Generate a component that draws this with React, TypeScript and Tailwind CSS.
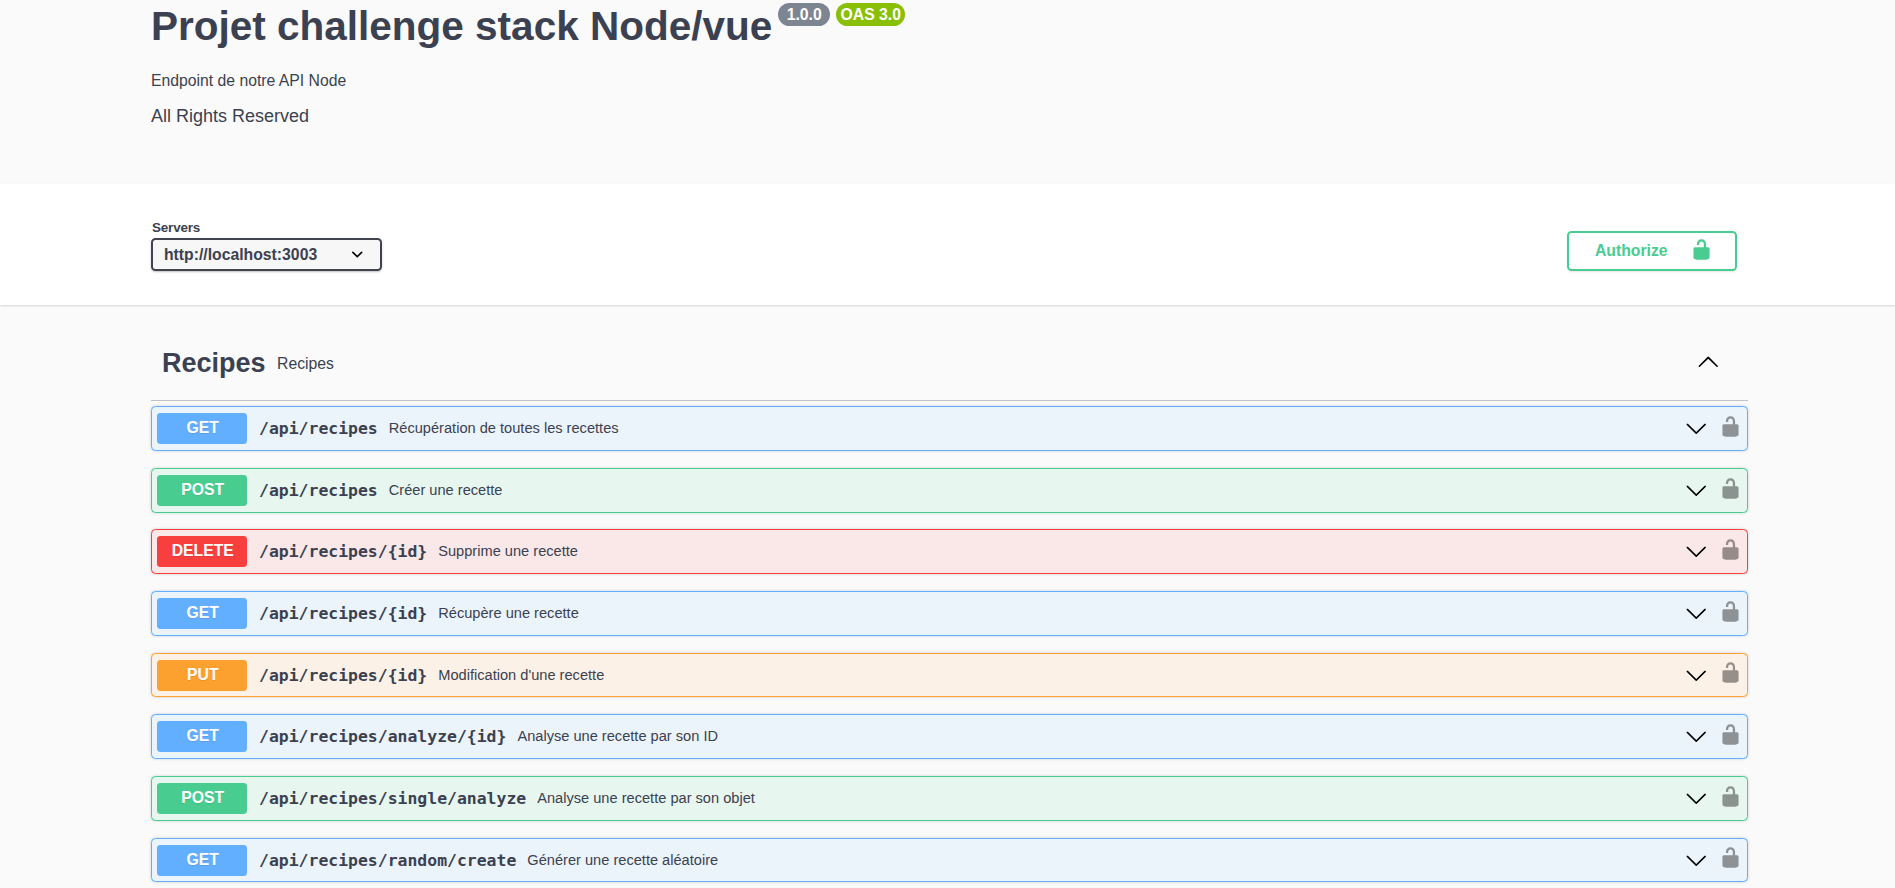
type Method = "GET" | "POST" | "PUT" | "DELETE";

interface Operation {
  method: Method;
  path: string;
  summary: string;
}

const operations: Operation[] = [
  { method: "GET", path: "/api/recipes", summary: "Récupération de toutes les recettes" },
  { method: "POST", path: "/api/recipes", summary: "Créer une recette" },
  { method: "DELETE", path: "/api/recipes/{id}", summary: "Supprime une recette" },
  { method: "GET", path: "/api/recipes/{id}", summary: "Récupère une recette" },
  { method: "PUT", path: "/api/recipes/{id}", summary: "Modification d'une recette" },
  { method: "GET", path: "/api/recipes/analyze/{id}", summary: "Analyse une recette par son ID" },
  { method: "POST", path: "/api/recipes/single/analyze", summary: "Analyse une recette par son objet" },
  { method: "GET", path: "/api/recipes/random/create", summary: "Générer une recette aléatoire" },
];

const rowStyles: Record<Method, string> = {
  GET: "border-[#61affe] bg-[#ebf3fb]",
  POST: "border-[#49cc90] bg-[#e7f6ef]",
  PUT: "border-[#fca130] bg-[#fbf1e6]",
  DELETE: "border-[#f93e3e] bg-[#fae7e7]",
};

const badgeStyles: Record<Method, string> = {
  GET: "bg-[#61affe]",
  POST: "bg-[#49cc90]",
  PUT: "bg-[#fca130]",
  DELETE: "bg-[#f93e3e]",
};

function UnlockIcon({ className }: { className: string }) {
  return (
    <svg viewBox="0 0 20 20" className={className} fill="currentColor" aria-hidden="true">
      <path d="M15.8 8H14V5.6C14 2.703 12.665 1 10 1 7.334 1 6 2.703 6 5.6V6h2v-.801C8 3.754 8.797 3 10 3c1.203 0 2 .754 2 2.199V8H4c-.553 0-1 .646-1 1.199V17c0 .549.428 1.139.951 1.307l1.197.387C5.672 18.861 6.55 19 7.1 19h5.8c.549 0 1.428-.139 1.951-.307l1.196-.387c.524-.167.953-.757.953-1.306V9.199C17 8.646 16.352 8 15.8 8z" />
    </svg>
  );
}

function ArrowDown({ className }: { className: string }) {
  return (
    <svg viewBox="0 0 20 20" className={className} aria-hidden="true">
      <path d="M17.418 6.109c.272-.268.709-.268.979 0s.271.701 0 .969l-7.908 7.83c-.27.268-.707.268-.979 0l-7.908-7.83c-.27-.268-.27-.701 0-.969.271-.268.709-.268.979 0L10 13.25l7.418-7.141z" />
    </svg>
  );
}

function ArrowUp({ className }: { className: string }) {
  return (
    <svg viewBox="0 0 20 20" className={className} aria-hidden="true">
      <path d="M17.418 14.908c.272.268.709.268.979 0s.271-.701 0-.969l-7.908-7.83c-.27-.268-.707-.268-.979 0l-7.908 7.83c-.27.268-.27.701 0 .969.271.268.709.268.979 0L10 7.767l7.418 7.141z" />
    </svg>
  );
}

function SelectArrow() {
  return (
    <svg viewBox="0 0 20 20" className="size-[22.5px]" aria-hidden="true">
      <path d="M13.418 7.859a.695.695 0 01.978 0 .68.68 0 010 .969l-3.908 3.83a.697.697 0 01-.979 0l-3.908-3.83a.68.68 0 010-.969.695.695 0 01.978 0L10 11l3.418-3.141z" />
    </svg>
  );
}

function OperationRow({ method, path, summary }: Operation) {
  return (
    <div
      className={`mb-[17px] flex items-center rounded-[4.5px] border pr-[5px] pl-[5px] shadow-[0_0_3px_rgba(0,0,0,0.19)] nth-2:mb-4 ${rowStyles[method]}`}
    >
      <span
        className={`flex h-[31px] w-[90px] shrink-0 items-center justify-center rounded-[3.4px] pb-px pl-[1.5px] text-[15.75px] font-bold text-white [text-shadow:0_1px_0_rgba(0,0,0,0.1)] ${badgeStyles[method]}`}
      >
        {method}
      </span>
      <span className="ml-[12px] pt-px font-['DejaVu_Sans_Mono',monospace] text-[16.44px] leading-6 font-bold whitespace-nowrap">
        {path}
      </span>
      <span className="ml-[11px] grow pt-px text-[14.625px] whitespace-nowrap">{summary}</span>
      <ArrowDown className="size-[22.5px] fill-black" />
      <UnlockIcon className="mb-[5px] ml-[11.5px] size-[23px] text-black/40" />
    </div>
  );
}

export default function App() {
  return (
    <div className="h-[888px] overflow-hidden bg-[#fafafa] font-['Liberation_Sans',Arial,sans-serif] text-[#3b4151]">
      <header className="h-[184px] px-[151px]">
        <div className="flex h-[52px] items-start">
          <h1 className="text-[40.5px] leading-[52px] font-bold whitespace-nowrap">Projet challenge stack Node/vue</h1>
          <span className="mt-[3px] ml-[6px] flex h-[23px] w-[52px] items-center justify-center rounded-full bg-[#7d8492] text-[15.75px] font-bold text-white">
            1.0.0
          </span>
          <span className="mt-[3px] ml-[6px] flex h-[23px] w-[69px] items-center justify-center rounded-full bg-[#89bf04] text-[15.75px] font-bold whitespace-nowrap text-white">
            OAS 3.0
          </span>
        </div>
        <p className="mt-[17.5px] text-[15.75px] leading-[22px]">Endpoint de notre API Node</p>
        <p className="mt-[13.5px] text-[18px] leading-[22px]">All Rights Reserved</p>
      </header>

      <section className="flex h-[121px] items-start justify-between bg-white pr-[158px] pl-[151px] shadow-[0_1px_2px_rgba(0,0,0,0.15)]">
        <div className="pt-[34px]">
          <div className="pb-px pl-px text-[13.5px] leading-[19px] font-bold tracking-[-0.2px]">Servers</div>
          <div className="flex h-[33px] w-[231px] items-center justify-between rounded-[4.5px] border-2 border-[#41444e] bg-[#f7f7f7] pr-[12px] pl-[11px] text-[15.75px] font-bold shadow-[0_1px_2px_rgba(0,0,0,0.25)]">
            <span>http://localhost:3003</span>
            <SelectArrow />
          </div>
        </div>
        <button className="mt-[47px] flex h-[40px] w-[170px] items-center justify-between rounded-[4.5px] border-2 border-[#49cc90] pr-[22px] pl-[26px] text-[15.75px] font-bold text-[#49cc90] shadow-[0_1px_2px_rgba(0,0,0,0.1)]">
          <span>Authorize</span>
          <UnlockIcon className="mb-[3px] size-[23px]" />
        </button>
      </section>

      <main className="pr-[147px] pl-[151px]">
        <div className="mb-[5px] flex h-[96px] items-center border-b border-[#3b4151]/30 pt-[20px] pr-[28.5px] pl-[11px]">
          <h2 className="text-[27px] leading-8 font-bold">Recipes</h2>
          <span className="ml-[11.5px] grow pt-[2px] text-[15.75px]">Recipes</span>
          <ArrowUp className="mb-[2px] size-[22.5px] fill-black" />
        </div>
        <div className="grid grid-rows-[62px_61px_62px_62px_61px_62px_62px_61px]">
          {operations.map((op) => (
            <OperationRow key={`${op.method} ${op.path}`} {...op} />
          ))}
        </div>
      </main>
    </div>
  );
}
